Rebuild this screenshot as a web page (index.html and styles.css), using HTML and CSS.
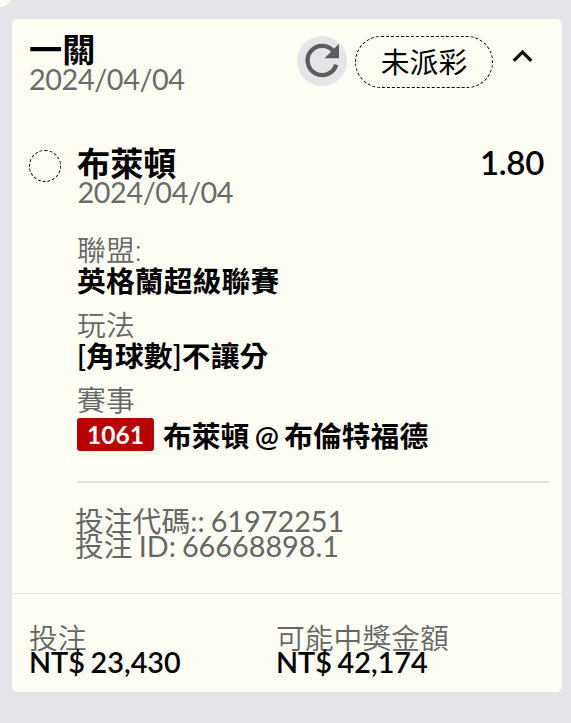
FILE: index.html
```html
<!DOCTYPE html>
<html lang="zh-Hant">
<head>
<meta charset="utf-8">
<title>投注</title>
<link rel="stylesheet" href="styles.css">
</head>
<body>
<div class="previous-card"></div>
<main class="card">
  <header class="head">
    <div class="head-text">
      <h1 class="title">一關</h1>
      <div class="date">2024/04/04</div>
    </div>
    <button class="refresh" aria-label="refresh">
      <svg width="50" height="50" viewBox="0 0 50 50"><path d="M36.8 15.6A14.6 14.6 0 1 0 39.2 28.6" fill="none" stroke="#5c5c5c" stroke-width="4.3"/><path d="M42 7.8V22.3H27.5Z" fill="#5c5c5c"/></svg>
    </button>
    <div class="status">未派彩</div>
    <svg class="chevron" width="22" height="16" viewBox="0 0 22 16"><path d="M1.7 12.8L10.5 4L19.3 12.8" fill="none" stroke="#111" stroke-width="3.3"/></svg>
  </header>
  <section class="bet">
    <span class="circle"></span>
    <div class="details">
      <div class="pick"><h2 class="title">布萊頓</h2><span class="odds">1.80</span></div>
      <div class="date">2024/04/04</div>
      <dl class="facts">
        <div class="fact"><dt>聯盟:</dt><dd>英格蘭超級聯賽</dd></div>
        <div class="fact"><dt>玩法</dt><dd><span class="sign">[</span>角球數<span class="sign">]</span>不讓分</dd></div>
        <div class="fact"><dt>賽事</dt><dd class="match"><span class="badge">1061</span><span class="teams">布萊頓 <span class="sign">@</span> 布倫特福德</span></dd></div>
      </dl>
      <div class="codes">
        <div>投注代碼:: 61972251</div>
        <div>投注 ID: 66668898.1</div>
      </div>
    </div>
  </section>
  <footer class="totals">
    <div><div class="label">投注</div><div class="amount">NT$ 23,430</div></div>
    <div><div class="label">可能中獎金額</div><div class="amount">NT$ 42,174</div></div>
  </footer>
</main>
</body>
</html>
```
FILE: styles.css
```css
* { box-sizing: border-box; }
body {
  margin: 0;
  height: 723px;
  padding: 19px 9px 0 12px;
  overflow: hidden;
  background: #e4e5e8;
  color: #000;
  font-family: Lato, "Noto Sans CJK TC", sans-serif;
  font-size: 28.8px;
  line-height: 29px;
  white-space: nowrap;
}
h1, h2, dl, dd { margin: 0; }
.previous-card {
  position: absolute;
  top: -20px;
  left: -18px;
  width: 30px;
  height: 27px;
  border-radius: 12px;
  background: #fffef5;
}
.card {
  height: 673px;
  border-radius: 6px;
  background: #fffef5;
}
.head {
  display: flex;
  height: 130px;
  padding: 14px 28px 0 17px;
}
.head-text { flex: 1; }
.title {
  font-size: 33.2px;
  line-height: 32px;
  font-weight: 700;
}
.date { color: #6b6b6b; font-weight: 400; letter-spacing: -0.4px; }
.refresh {
  width: 50px;
  height: 50px;
  margin: 3px 8px 0 0;
  padding: 0;
  border: 0;
  border-radius: 50%;
  background: #e4e5e8;
}
.refresh svg { display: block; }
.status {
  width: 138px;
  height: 52px;
  margin-top: 3px;
  border: 1px dashed #000;
  border-radius: 26px;
  letter-spacing: 0.1px;
  line-height: 51px;
  text-align: center;
}
.chevron { margin: 15px 0 0 19px; }
.bet {
  display: flex;
  height: 444px;
  padding: 0 13px 0 17px;
}
.circle {
  width: 32px;
  height: 32px;
  margin: 1px 16px 0 0;
  border: 1px dashed #000;
  border-radius: 50%;
}
.details { flex: 1; }
.pick {
  display: flex;
  justify-content: space-between;
  height: 29px;
  padding-right: 5px;
}
.pick .title { line-height: 28px; }
.details .date { padding-left: 0.5px; }
.odds {
  font-size: 33px;
  line-height: 27px;
  font-weight: 600;
  letter-spacing: -0.3px;
}
.facts {
  margin-top: 28px;
  padding-bottom: 29px;
  border-bottom: 2px solid #e3e2dd;
}
.fact { height: 75px; }
.fact:last-child { height: 67px; }
.fact dt { height: 31px; letter-spacing: 0.1px; line-height: 31px; color: #666; font-weight: 350; }
.fact dd { line-height: 31px; font-weight: 700; letter-spacing: 0.1px; }
.fact .sign { font-weight: 600; }
.fact .match { display: flex; align-items: flex-start; gap: 9px; padding-top: 2px; letter-spacing: 0; }
.match .badge {
  width: 77px;
  height: 33px;
  border-radius: 3px;
  background: #b80000;
  color: #fff;
  font-size: 24.5px;
  line-height: 33px;
  text-align: center;
}
.teams { padding-top: 3px; word-spacing: -1.7px; }
.codes {
  margin: 26px 0 0 -2px;
  color: #666;
  line-height: 25px;
  word-spacing: -1.3px;
}
.totals {
  display: grid;
  grid-template-columns: 247px 1fr;
  padding: 32px 17px 0;
  border-top: 1px solid #e3e2dd;
  line-height: 25px;
}
.label { height: 24px; color: #666; font-weight: 350; }
.amount { font-weight: 600; word-spacing: -1.5px; }
```
